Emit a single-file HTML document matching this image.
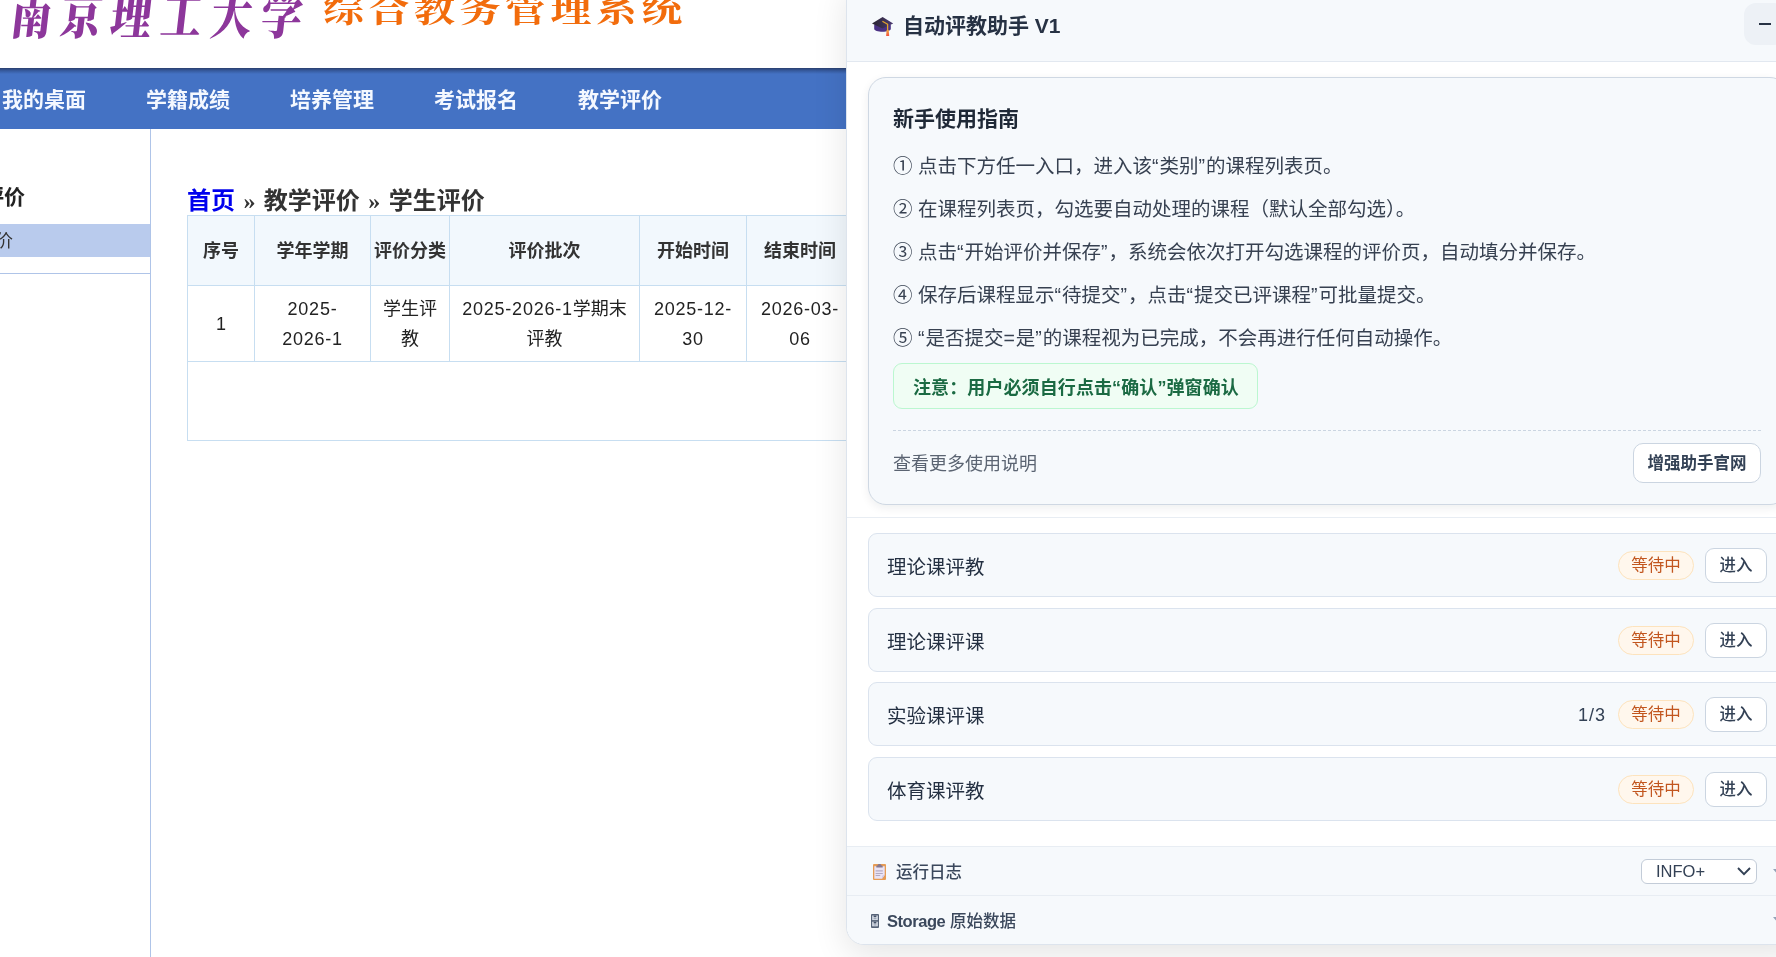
<!DOCTYPE html>
<html lang="zh-CN">
<head>
<meta charset="utf-8">
<title>综合教务管理系统</title>
<style>
*{box-sizing:border-box;margin:0;padding:0}
html,body{width:1776px;height:957px;overflow:hidden;background:#fff}
body{font-family:"Liberation Sans","Noto Sans CJK SC",sans-serif;color:#222;position:relative;will-change:transform}
.abs{position:absolute}
/* ---------- underlying page ---------- */
#logo{left:7px;top:-18px;height:70px;white-space:nowrap;font-family:"Liberation Serif","Noto Serif CJK SC",serif;font-weight:900;font-size:50px;line-height:70px;color:#8d379b;letter-spacing:11px;transform:scaleX(.82) skewX(-8deg);transform-origin:left bottom}
#sys{left:323px;top:-17px;height:56px;white-space:nowrap;font-family:"Liberation Serif","Noto Serif CJK SC",serif;font-weight:700;font-size:35px;line-height:56px;color:#f26c0c;letter-spacing:3.9px;transform:scaleX(1.17);transform-origin:left center}
#nav{left:0;top:68px;width:860px;height:61px;background:#4472c4}
#nav:before{content:"";position:absolute;left:0;top:0;width:100%;height:6px;background:linear-gradient(#2a3f6e,#365a9e 45%,#4472c4)}
#nav span{position:absolute;top:0;line-height:63px;font-size:21px;font-weight:bold;color:#f4f8ff;white-space:nowrap}
#side{left:0;top:129px;width:151px;height:828px;border-right:1px solid #afc4e8}
#side .hd{position:absolute;left:-38px;top:52px;font-size:21px;font-weight:bold;line-height:32px;color:#222;white-space:nowrap}
#side .sel{position:absolute;left:0;top:95px;width:150px;height:33px;background:#b9cbed}
#side .sel span{position:absolute;left:-23px;top:1px;line-height:33px;font-size:18px;color:#333}
#side .ln{position:absolute;left:0;top:144px;width:150px;height:1px;background:#afc4e8}
#crumb{left:187px;top:183px;font-size:24px;font-weight:bold;line-height:36px;color:#333;white-space:nowrap}
#crumb a{color:#0000ee;text-decoration:none}
#crumb i{font-style:normal;font-family:"Liberation Serif",serif;margin:0 1.75px}
#box{left:187px;top:215px;width:700px;height:226px;border:1px solid #c7def1}
table{border-collapse:collapse;position:absolute;left:-1px;top:-1px;table-layout:fixed;width:667px}
th,td{border:1px solid #c7def1;text-align:center;vertical-align:middle;font-size:18px;line-height:30px;color:#222;padding:0}
th{height:70px;background:#f2f8fd;font-weight:bold;color:#333}
td{height:76px;background:#fff}
td u{text-decoration:none;letter-spacing:.75px}
/* ---------- assistant panel ---------- */
#panel{left:846px;top:-20px;width:960px;height:965px;background:#fff;border:1px solid #dde4ed;border-radius:18px;box-shadow:0 10px 34px rgba(0,0,0,.105);overflow:hidden;color:#334155}
#ph{left:0;top:0;width:100%;height:81px;background:#f6f9fc;border-bottom:1px solid #e2e8f0}
#ph .t{position:absolute;left:56px;top:30px;line-height:30px;font-size:21px;font-weight:bold;color:#273244;white-space:nowrap}
#ph .min{position:absolute;left:897px;top:22px;width:42px;height:42px;border-radius:12px;background:#edf1f6}
#ph .min:after{content:"";position:absolute;left:15px;top:20px;width:12px;height:2px;background:#273244}
#guide{left:21px;top:96px;width:920px;height:428px;background:#f6f9fc;border:1px solid #cfd8e3;border-radius:18px;box-shadow:0 3px 10px rgba(15,23,42,.07)}
#guide h3{position:absolute;left:24px;top:25px;font-size:21px;line-height:32px;font-weight:bold;color:#1f2937}
#guide p{position:absolute;left:24px;font-size:19.5px;line-height:32px;color:#374151;white-space:nowrap}
q{quotes:none;letter-spacing:1px}
q:before,q:after{content:none}
#note{position:absolute;left:24px;top:285px;width:365px;height:46px;border:1px solid #bbf7d0;background:#f0fdf4;border-radius:9px;font-size:18px;font-weight:bold;color:#1b6a43;line-height:48px;letter-spacing:.1px;padding-left:19px;white-space:nowrap}
#dash{position:absolute;left:24px;top:352px;width:868px;height:0;border-top:1px dashed #cbd5e1}
#more{position:absolute;left:24px;top:370px;font-size:18px;line-height:32px;color:#5b6472}
#site{position:absolute;left:764px;top:365px;width:128px;height:40px;border:1px solid #cbd5e1;border-radius:10px;background:#fff;font-size:16.5px;font-weight:bold;color:#334155;text-align:center;line-height:38px}
#sep{left:0;top:536px;width:100%;height:1px;background:#e8edf3}
.row{left:21px;width:920px;height:64px;background:#f6f9fc;border:1px solid #dbe3ee;border-radius:9px}
.row .n{position:absolute;left:18px;top:.5px;line-height:64px;font-size:19.5px;color:#243042}
.row .c{position:absolute;right:181px;top:0;line-height:64px;font-size:18px;letter-spacing:1px;color:#334155}
.row .b{position:absolute;left:749px;top:17px;width:76px;height:29px;border:1px solid #fde3bd;background:#fff7ed;border-radius:15px;font-size:16.5px;color:#c2561f;text-align:center;line-height:27px}
.row .e{position:absolute;left:836px;top:14px;width:62px;height:35px;border:1px solid #cbd5e1;background:#fff;border-radius:9px;font-size:16.5px;font-weight:500;color:#334155;text-align:center;line-height:33px}
.sec{left:0;width:100%;background:#f6f9fc;border-top:1px solid #e8edf3}
.sec .l{position:absolute;top:0;font-size:16.5px;font-weight:500;color:#3b485c;white-space:nowrap}
.tri{position:absolute;left:926px;width:0;height:0;border-left:5px solid transparent;border-right:5px solid transparent;border-top:6px solid #94a3b8}
#sel{position:absolute;left:794px;top:12px;width:116px;height:25px;border:1px solid #c3ccd8;border-radius:6px;background:#fff;font-size:16.5px;color:#334155;line-height:23px;padding-left:14px}
</style>
</head>
<body>
<!-- underlying page -->
<div id="logo" class="abs">南京理工大学</div>
<div id="sys" class="abs">综合教务管理系统</div>
<div id="nav" class="abs">
  <span style="left:2px">我的桌面</span>
  <span style="left:146px">学籍成绩</span>
  <span style="left:290px">培养管理</span>
  <span style="left:434px">考试报名</span>
  <span style="left:578px">教学评价</span>
</div>
<div id="side" class="abs">
  <div class="hd">学评价</div>
  <div class="sel"><span>评价</span></div>
  <div class="ln"></div>
</div>
<div id="crumb" class="abs"><a>首页</a> <i>»</i> 教学评价 <i>»</i> 学生评价</div>
<div id="box" class="abs">
  <table>
    <colgroup><col style="width:67px"><col style="width:116px"><col style="width:79px"><col style="width:190px"><col style="width:107px"><col style="width:107px"></colgroup>
    <tr><th>序号</th><th>学年学期</th><th>评价分类</th><th>评价批次</th><th>开始时间</th><th>结束时间</th></tr>
    <tr><td>1</td><td><u>2025-<br>2026-1</u></td><td>学生评<br>教</td><td><u>2025-2026-1</u>学期末<br>评教</td><td><u>2025-12-<br>30</u></td><td><u>2026-03-<br>06</u></td></tr>
  </table>
</div>

<!-- assistant panel -->
<div id="panel" class="abs">
  <div id="ph" class="abs">
    <svg class="abs" style="left:24px;top:35px" width="24" height="22" viewBox="0 0 24 22">
      <defs><linearGradient id="cg" x1="0" y1="0" x2="1" y2="0"><stop offset="0" stop-color="#29242f"/><stop offset="1" stop-color="#4b3a72"/></linearGradient>
      <linearGradient id="tg" x1="0" y1="0" x2="0" y2="1"><stop offset="0" stop-color="#f4a93a"/><stop offset="1" stop-color="#f2503f"/></linearGradient></defs>
      <path d="M3.2 8.5V13c0 1.6 3.8 2.7 8.3 2.7s8.3-1.100 8.3-2.700V8.500z" fill="#4a3184"/>
      <path d="M11.600 1L22.200 7.400L11.500 12.600L1 7.400z" fill="url(#cg)"/>
      <path d="M11.400 5.300L16.600 8.300V15" fill="none" stroke="#e3a32c" stroke-width="1.300" stroke-linejoin="round"/>
      <path d="M15.600 14h2.100l.5 6h-3.100z" fill="url(#tg)"/>
    </svg>
    <div class="t">自动评教助手 V1</div>
    <div class="min"></div>
  </div>
  <div id="guide" class="abs">
    <h3>新手使用指南</h3>
    <p style="top:72px">① 点击下方任一入口，进入该<q>“</q>类别<q>”</q>的课程列表页。</p>
    <p style="top:115px">② 在课程列表页，勾选要自动处理的课程（默认全部勾选）。</p>
    <p style="top:158px">③ 点击<q>“</q>开始评价并保存<q>”</q>，系统会依次打开勾选课程的评价页，自动填分并保存。</p>
    <p style="top:201px">④ 保存后课程显示<q>“</q>待提交<q>”</q>，点击<q>“</q>提交已评课程<q>”</q>可批量提交。</p>
    <p style="top:244px">⑤ <q>“</q>是否提交<q>=</q>是<q>”</q>的课程视为已完成，不会再进行任何自动操作。</p>
    <div id="note">注意：用户必须自行点击“确认”弹窗确认</div>
    <div id="dash"></div>
    <div id="more">查看更多使用说明</div>
    <div id="site">增强助手官网</div>
  </div>
  <div id="sep" class="abs"></div>
  <div class="row abs" style="top:552px"><span class="n">理论课评教</span><span class="b">等待中</span><span class="e">进入</span></div>
  <div class="row abs" style="top:627px"><span class="n">理论课评课</span><span class="b">等待中</span><span class="e">进入</span></div>
  <div class="row abs" style="top:701px"><span class="n">实验课评课</span><span class="c">1/3</span><span class="b">等待中</span><span class="e">进入</span></div>
  <div class="row abs" style="top:776px"><span class="n">体育课评教</span><span class="b">等待中</span><span class="e">进入</span></div>
  <div class="sec abs" style="top:865px;height:50px">
    <svg class="abs" style="left:26px;top:17px" width="13" height="16" viewBox="0 0 13 16">
      <rect x="0" y="0" width="13" height="16" rx="1" fill="#e79c55"/>
      <path d="M1.300 2.300h10.400v8.700l-2.700 3.700H1.300z" fill="#e9e3f5"/>
      <path d="M9 14.700l.3-3.200 2.400-.5z" fill="#cfc6e6"/>
      <path d="M3.300 3.600V2.300c0-.6.600-1 1.300-1.100C4.900.4 5.600 0 6.500 0s1.600.400 1.900 1.200c.7.100 1.300.5 1.300 1.100v1.300z" fill="#87798f"/>
      <rect x="2.600" y="6" width="7.200" height="1.700" fill="#c4bbd2"/>
      <rect x="2.600" y="9" width="7.200" height=".8" fill="#a59bb6"/>
      <rect x="2.600" y="11.100" width="4.600" height=".8" fill="#a59bb6"/>
    </svg>
    <span class="l" style="left:49px;line-height:51px">运行日志</span>
    <div id="sel">INFO+<svg style="position:absolute;left:95px;top:7px" width="14" height="9" viewBox="0 0 14 9"><path d="M1 1l6 6.200 6-6.200" fill="none" stroke="#334155" stroke-width="1.900"/></svg></div>
    <div class="tri" style="top:22px"></div>
  </div>
  <div class="sec abs" style="top:914.3px;height:60px">
    <svg class="abs" style="left:24px;top:18px" width="8" height="14" viewBox="0 0 8 14">
      <rect x="0" y="0" width="8" height="14" rx="1" fill="#556277"/>
      <rect x="1.200" y="1.500" width="5.600" height="4.600" fill="#dfe5ee"/>
      <rect x="1.200" y="7.700" width="5.600" height="4.600" fill="#dfe5ee"/>
      <path d="M2.600 1.500h2.800v1.800H2.600zM2.600 7.700h2.800v1.800H2.600z" fill="#465369"/>
      <rect x="2.500" y="4.300" width="3" height=".9" fill="#7c889b"/>
      <rect x="2.500" y="10.500" width="3" height=".9" fill="#7c889b"/>
    </svg>
    <span class="l" style="left:40px;line-height:50px"><b style="letter-spacing:-.45px">Storage</b> 原始数据</span>
    <div class="tri" style="top:21px"></div>
  </div>
</div>
</body>
</html>
